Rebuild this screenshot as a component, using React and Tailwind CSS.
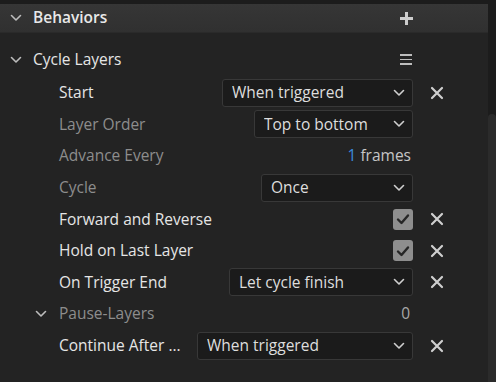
import React from 'react';

const font = { fontFamily: '"Open Sans", "Noto Sans", sans-serif' };

const Chevron = ({ className = '' }) => (
    <svg width="12" height="8" viewBox="0 0 12 8" className={className}>
        <path d="M1.5 1.5 L6 6 L10.5 1.5" fill="none" stroke="currentColor" strokeWidth="1.6" strokeLinecap="round" strokeLinejoin="round" />
    </svg>
);

const Close = () => (
    <svg width="14" height="14" viewBox="0 0 14 14" className="text-[#cfcfcf]">
        <path d="M2 2 L12 12 M12 2 L2 12" stroke="currentColor" strokeWidth="2.2" strokeLinecap="round" />
    </svg>
);

const Check = () => (
    <div className="w-[20px] h-[21px] rounded-[3px] bg-[#8e8e8e] flex items-center justify-center">
        <svg width="14" height="12" viewBox="0 0 14 12">
            <path d="M2 6.5 L5.5 10 L12 2.5" fill="none" stroke="#262626" strokeWidth="2.4" strokeLinecap="round" strokeLinejoin="round" />
        </svg>
    </div>
);

const Dropdown = ({ value, width }) => (
    <div className={`${width} h-[28px] rounded-[3px] border border-[#383838] bg-[#1b1b1b] flex items-center pl-[9px] pr-[7px]`}>
        <span className="flex-1 text-[#dedede] truncate">{value}</span>
        <Chevron className="text-[#cfcfcf]" />
    </div>
);

const Row = ({ label, dim, indent = 'pl-[59px]', control, close, chevron }) => (
    <div className={`h-[31.6px] flex items-center ${indent}`}>
        {chevron && <Chevron className="text-[#bdbdbd] mr-[12px]" />}
        <span className={`flex-1 whitespace-nowrap ${dim ? 'text-[#8d8d8d]' : 'text-[#e6e6e6]'}`}>{label}</span>
        <div className="flex justify-end">{control}</div>
        <div className="w-[48px] flex justify-center">{close && <Close />}</div>
    </div>
);

export default function App() {
    return (
        <div className="w-[496px] h-[382px] bg-[#1c1c1c] overflow-hidden text-[15.5px] flex flex-col" style={font}>
            <div className="h-[4px]" />
            <div className="flex flex-1">
                <div className="flex-1 bg-[#232323] pr-[27px]">
                    <div className="h-[29px] -mr-[27px] pr-[27px] bg-gradient-to-b from-[#363636] to-[#303030] flex items-center border-b border-[#2a2a2a]">
                        <Chevron className="text-[#bcbcbc] ml-[10px] mr-[11px]" />
                        <span className="flex-1 font-semibold text-[#e8e8e8]">Behaviors</span>
                        <svg width="15" height="15" viewBox="0 0 15 15" className="text-[#cccccc] mr-[47px]">
                            <path d="M7.5 1 V14 M1 7.5 H14" stroke="currentColor" strokeWidth="3" />
                        </svg>
                    </div>
                    <div className="h-[12px]" />
                    <div className="h-[29px] flex items-center">
                        <Chevron className="text-[#bcbcbc] ml-[10px] mr-[11px]" />
                        <span className="flex-1 text-[#e6e6e6]">Cycle Layers</span>
                        <div className="w-[12px] mr-[49px] flex flex-col gap-[3px]">
                            <div className="h-[1.5px] bg-[#bdbdbd]" />
                            <div className="h-[1.5px] bg-[#bdbdbd]" />
                            <div className="h-[1.5px] bg-[#bdbdbd]" />
                        </div>
                    </div>
                    <div className="h-[3px]" />
                    <Row label="Start" control={<Dropdown value="When triggered" width="w-[191px]" />} close />
                    <Row label="Layer Order" dim control={<Dropdown value="Top to bottom" width="w-[159px]" />} />
                    <Row label="Advance Every" dim control={<span className="pr-[2px]"><span className="text-[#3b8ee0]">1</span> <span className="text-[#c6c6c6]">frames</span></span>} />
                    <Row label="Cycle" dim control={<Dropdown value="Once" width="w-[152px]" />} />
                    <Row label="Forward and Reverse" control={<Check />} close />
                    <Row label="Hold on Last Layer" control={<Check />} close />
                    <Row label="On Trigger End" control={<Dropdown value="Let cycle finish" width="w-[184px]" />} close />
                    <Row label="Pause-Layers" dim indent="pl-[35px]" chevron control={<span className="text-[#a8a8a8] pr-[3px]">0</span>} />
                    <Row label="Continue After ..." control={<Dropdown value="When triggered" width="w-[216px]" />} close />
                </div>
                <div className="w-[8px] flex flex-col">
                    <div className="h-[110px]" />
                    <div className="flex-1 bg-[#2b2b2b] rounded-t-[4px]" />
                </div>
            </div>
        </div>
    );
}
